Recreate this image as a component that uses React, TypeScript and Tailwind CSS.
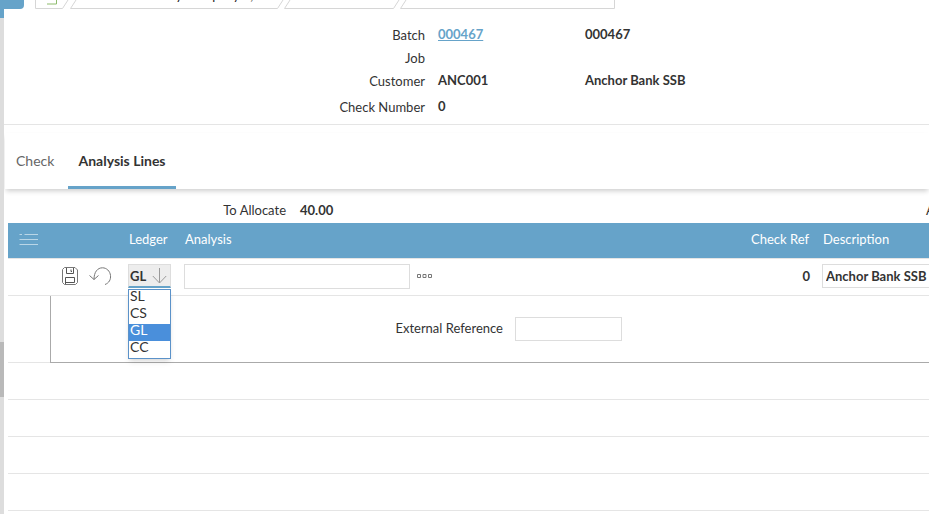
import React from "react";

const details = [
  { label: "Batch", value: "000467", link: true, note: "000467", row: "h-[23px]" },
  { label: "Job", value: "", link: false, note: "", row: "h-[23px]" },
  { label: "Customer", value: "ANC001", link: false, note: "Anchor Bank SSB", row: "h-[26px]" },
  { label: "Check Number", value: "0", link: false, note: "", row: "h-7" },
];

const ledgers = ["SL", "CS", "GL", "CC"];

function Breadcrumb() {
  return (
    <nav aria-label="Breadcrumb" className="relative ml-[31px] h-[9px] shrink-0 overflow-hidden">
      <svg className="block h-[9px] w-[582px]" viewBox="0 0 582 9" fill="none" stroke="#d6d6d6">
        <path d="M0.5 0V8.5H27.5L33 0" />
        <path d="M41 0L35.5 8.5H242.5L248 0" />
        <path d="M255 0L249.5 8.5H358.5L364 0" />
        <path d="M371 0L365.5 8.5H579.5V0" />
        <path d="M12 4H21.5V0" stroke="#8dbb6c" />
      </svg>
      <span className="absolute bottom-1.5 left-[78px] whitespace-nowrap leading-4 text-[#222]">Check Entry Company 1,</span>
    </nav>
  );
}

function SaveIcon() {
  return (
    <svg width="16" height="18" viewBox="0 0 16 18" fill="none" stroke="#777">
      <path d="M2.5 0.5H13L15.5 3V15.5L13.5 17.5H2.5L0.5 15.5V2.5Z" />
      <path d="M4.5 1V6.5H11.5V1M9 2.5V4.5H10M3.5 17V10.5H12.5V15.5H3.5" stroke="#555" />
    </svg>
  );
}

function UndoIcon() {
  return (
    <svg width="23" height="18" viewBox="0 0 23 18" fill="none" stroke="#777">
      <path d="M16 17.5C20 16 22 12.5 21.5 8.5C21 4 17.5 0.8 13.5 0.8C8.500 0.800 5 5 5 12.500M0.500 8.500L5 12.500L9.500 8.500" />
    </svg>
  );
}

export default function App() {
  return (
    <div className="flex h-screen overflow-hidden bg-white font-[Lato,sans-serif] text-[13px] leading-4 text-[#333]">
      <aside className="flex w-1 shrink-0 flex-col bg-[#ddd]">
        <div className="h-[18px] bg-[#66a3c9]">
          <div className="relative z-10 h-[9px] w-6 rounded-br-sm bg-[#66a3c9]" />
        </div>
        <div className="mt-[324px] h-[55px] bg-[#b9b9b9]" />
      </aside>
      <main className="min-w-0 flex-1 overflow-hidden">
        <Breadcrumb />
        <section className="h-[116px] border-b border-[#e5e5e5] pt-[14px]">
          {details.map((d) => (
            <div key={d.label} className={"flex whitespace-nowrap " + d.row}>
              <span className="w-[421px] shrink-0 pt-1 text-right">{d.label}</span>
              <span className="ml-[13px] w-[147px] shrink-0 pt-[3px] font-bold">
                {d.link ? <a href="#batch" className="text-[#66a3c9] underline">{d.value}</a> : d.value}
              </span>
              <span className="pt-[3px] font-bold">{d.note}</span>
            </div>
          ))}
        </section>
        <div role="tablist" className="ml-px mt-2 flex h-14 items-stretch bg-white text-[14px] shadow-[0_3px_5px_-1px_rgba(0,0,0,0.2)]">
          <button role="tab" aria-selected="false" className="w-[63px] pb-px pl-[11px] text-left text-[#666]">Check</button>
          <button role="tab" aria-selected="true" className="w-[108px] border-b-3 border-[#66a3c9] pt-0.5 font-bold">Analysis Lines</button>
        </div>
        <div className="flex h-[34px] items-end justify-between overflow-hidden whitespace-nowrap pb-[5px]">
          <div className="flex">
            <span className="w-[282px] text-right">To Allocate</span>
            <span className="ml-[14px] font-bold">40.00</span>
          </div>
          <span className="w-[3px]">Allocated</span>
        </div>
        <section className="ml-1">
          <header className="flex h-[35px] items-center bg-[#66a3c9] pb-[3px] text-white">
            <button aria-label="Row options" className="ml-[11px] w-[110px]">
              <svg width="20" height="13" viewBox="0 0 20 13" fill="none" stroke="#b9d6e7">
                <path d="M0.5 1.5H3M5.5 1.5H19M0.5 6.500H19M0.500 11.500H19" />
              </svg>
            </button>
            <span className="w-14">Ledger</span>
            <span className="flex-1">Analysis</span>
            <span className="w-[70px] text-right">Check Ref</span>
            <span className="ml-[14px] w-[106px]">Description</span>
          </header>
          <div className="flex h-[38px] items-center border-y border-[#e5e5e5] pb-0.5">
            <button aria-label="Save" className="ml-[54px] mr-[11px]"><SaveIcon /></button>
            <button aria-label="Undo" className="mr-4"><UndoIcon /></button>
            <div className="relative w-[43px]">
              <div className="flex h-6 items-center border border-b-2 border-[#ddd] border-b-[#66a3c9] bg-[#ededed]">
                <select aria-label="Ledger" defaultValue="GL" className="w-full appearance-none pl-px font-bold">
                  {ledgers.map((l) => <option key={l}>{l}</option>)}
                </select>
                <svg className="pointer-events-none absolute right-1" width="15" height="16" viewBox="0 0 15 16" fill="none" stroke="#999">
                  <path d="M7.5 0V15M0.800 8L7.500 15L14.200 8" />
                </svg>
              </div>
              <ul role="listbox" aria-label="Ledger options" className="absolute left-0 top-[25px] z-10 h-[70px] w-full border border-[#5b92c9] bg-white text-[14px] leading-3 shadow-md">
                {ledgers.map((l) => (
                  <li key={l} role="option" aria-selected={l === "GL"} className={l === "GL" ? "h-[17px] bg-[#4a8fdb] pl-px text-white" : "h-[17px] pl-px"}>{l}</li>
                ))}
              </ul>
            </div>
            <input aria-label="Analysis" className="ml-[13px] h-[25px] w-[226px] border border-[#ddd]" />
            <button aria-label="Find analysis" className="ml-[7px]">
              <svg width="15" height="4" viewBox="0 0 15 4" fill="none" stroke="#777">
                <path d="M0.5 0.5H3.500V3.500H0.500ZM6 0.500H9V3.500H6ZM11.500 0.500H14.500V3.500H11.500Z" />
              </svg>
            </button>
            <span className="flex-1 text-right font-bold">0</span>
            <div className="ml-3 w-[107px] overflow-hidden">
              <input aria-label="Description" defaultValue="Anchor Bank SSB" className="block h-6 w-40 border border-[#ddd] pl-[3px] font-bold" />
            </div>
          </div>
          <div className="flex h-[67px] border-b border-[#e5e5e5]">
            <div className="-mb-px ml-[42px] flex flex-1 items-center border-b border-l border-[#aaa]">
              <label htmlFor="external-reference" className="w-[452px] pb-0.5 text-right">External Reference</label>
              <input id="external-reference" className="ml-3 h-6 w-[107px] border border-[#ddd]" />
            </div>
          </div>
          {[1, 2, 3, 4].map((n) => <div key={n} className="h-[37px] border-b border-[#e5e5e5]" />)}
        </section>
      </main>
    </div>
  );
}
